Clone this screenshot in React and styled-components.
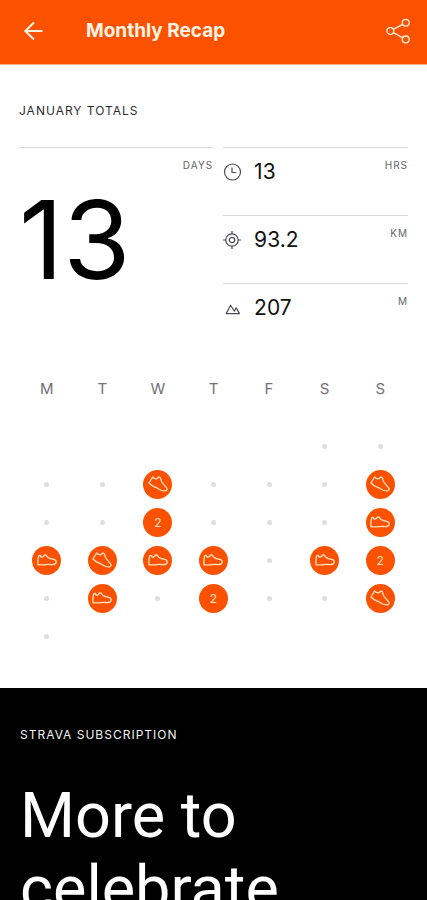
import styled, { createGlobalStyle } from "styled-components";

const GlobalStyle = createGlobalStyle`
  * {
    box-sizing: border-box;
  }

  body {
    margin: 0;
    background: #fff;
    color: #000;
    font-family: Inter, "Liberation Sans", sans-serif;
  }

  h1, h2, p, dl, dd {
    margin: 0;
  }
`;

const Header = styled.header`
  display: flex;
  align-items: center;
  height: 65px;
  padding: 0 14px 2px 20px;
  background: #fc5200;
  border-bottom: 1px solid #fdb594;
  color: #fff3e4;
`;

const IconButton = styled.button`
  display: flex;
  padding: 0;
  border: none;
  background: none;
  color: inherit;
  cursor: pointer;
`;

const Title = styled.h1`
  flex: 1;
  padding-left: 40px;
  font-size: 19px;
  font-weight: 700;
  line-height: 26px;
`;

const Section = styled.section`
  padding: 36px 19px 33px;
`;

const Eyebrow = styled.h2`
  font-size: 12px;
  font-weight: 400;
  line-height: 20px;
  letter-spacing: 1px;
  text-transform: uppercase;
  color: ${({ $light }) => ($light ? "#f2f2f2" : "#2b2b2f")};
`;

const Totals = styled.dl`
  display: grid;
  grid-template-columns: 21fr 20fr;
  column-gap: 10px;
  margin-top: 26px;
`;

const Days = styled.div`
  display: flex;
  flex-direction: column;
  border-top: 1px solid #d9d9d9;
  padding-top: 10px;
`;

const Unit = styled.dt`
  align-self: flex-start;
  margin-left: auto;
  font-size: 10px;
  line-height: 14px;
  letter-spacing: 1px;
  color: #66666b;
`;

const BigNumber = styled.dd`
  font-size: 109px;
  line-height: 134px;
`;

const Stats = styled.div`
  display: flex;
  flex-direction: column;
`;

const Stat = styled.div`
  display: flex;
  flex-direction: row-reverse;
  align-items: flex-start;
  height: 68px;
  padding-top: 10px;
  border-top: 1px solid #d9d9d9;
`;

const StatValue = styled.dd`
  display: flex;
  align-items: center;
  gap: 12px;
  font-size: 21px;
  line-height: 28px;
  color: #111;

  svg {
    color: #4c4c50;
  }
`;

const Calendar = styled.table`
  width: 100%;
  margin-top: 24px;
  border-collapse: collapse;
  table-layout: fixed;
`;

const Weekday = styled.th`
  height: 52px;
  padding: 0 0 24px;
  font-size: 15px;
  font-weight: 400;
  line-height: 20px;
  color: #717176;
`;

const Day = styled.td`
  height: 38px;
  padding: 0;
`;

const Dot = styled.div`
  width: 5px;
  height: 5px;
  margin: 0 auto;
  border-radius: 50%;
  background: #dedede;
`;

const Activity = styled.div`
  display: flex;
  align-items: center;
  justify-content: center;
  width: 29px;
  height: 29px;
  margin: 0 auto;
  border-radius: 50%;
  background: #fc5200;
  color: #ffe3c4;
  font-size: 12px;
`;

const Subscription = styled.section`
  padding: 37px 20px 40px;
  background: #000;
  color: #fff;
`;

const Headline = styled.p`
  max-width: 320px;
  margin-top: 34px;
  font-family: Roboto, "Liberation Sans", sans-serif;
  font-size: 63px;
  font-weight: 400;
  line-height: 73px;
`;

function BackIcon() {
  return (
    <svg
      width="26"
      height="26"
      viewBox="0 0 26 26"
      fill="none"
      stroke="currentColor"
      strokeWidth="2"
    >
      <path d="M22.5 13H5.5M14 4.5 5.3 13l8.7 8.5" />
    </svg>
  );
}

function ShareIcon() {
  return (
    <svg
      width="30"
      height="30"
      viewBox="0 0 30 30"
      fill="none"
      stroke="currentColor"
      strokeWidth="1.3"
    >
      <circle cx="7.3" cy="15" r="3.4" />
      <circle cx="22.7" cy="6.8" r="3.4" />
      <circle cx="22.7" cy="23.4" r="3.4" />
      <path d="m10.3 13.4 9.4-5M10.3 16.6l9.4 5.2" />
    </svg>
  );
}

function StatIcon({ children }) {
  return (
    <svg
      width="19"
      height="19"
      viewBox="0 0 19 19"
      fill="none"
      stroke="currentColor"
      strokeWidth="1.2"
    >
      {children}
    </svg>
  );
}

function ClockIcon() {
  return (
    <StatIcon>
      <circle cx="9.5" cy="9" r="8" />
      <path d="M9 4.5v5h4.3" />
    </StatIcon>
  );
}

function TargetIcon() {
  return (
    <StatIcon>
      <circle cx="9" cy="9" r="6.2" />
      <circle cx="9" cy="9" r="2.7" />
      <path d="M9 0v3M9 15v3M0 9h3M15 9h3" />
    </StatIcon>
  );
}

function MountainIcon() {
  return (
    <StatIcon>
      <path d="m3.2 14.6 4.4-8.4 3.7 6 1.9-3.4 3.3 5.8Z" strokeLinejoin="round" />
    </StatIcon>
  );
}

function ShoeIcon({ tilted }) {
  return (
    <svg
      width="24"
      height="24"
      viewBox="-12 -12 24 24"
      fill="none"
      stroke="currentColor"
      strokeWidth="1.3"
      strokeLinejoin="round"
    >
      {tilted ? (
        <path d="M-9-1-5.4-7l1.7 1.4C-2.4-5-.4-5.3.6-6.8l1.6.2c.6 2.2 1 3.9 2.2 5.5L8.8 4.2c.8 1.3 0 2.4-1.4 2.6C5.2 7 3 6.4 1.2 5.2-.4 4.2-1.6 3.4-3.4 2.8-5.6 2-7.4.8-9-1Z" />
      ) : (
        <path d="M-9-.8-8.2-4.4l1.6-.2.8 1.8c1.4.3 2.6-.8 3.4-2.3l1.4.1C-.1-3.1 1.4-2 3.3-1.5l3.5.8C8.5-.3 9.3.9 9.2 2.1 9 3.7 7.7 4.4 6.1 4.5c-2.4.2-4.6-.3-7 .1-2.5.4-5.3.2-8.1.2-.2-2-.2-3.7 0-5.6Z" />
      )}
    </svg>
  );
}

const weekdays = ["M", "T", "W", "T", "F", "S", "S"];

// "." rest day, "s" shoe, "t" tilted shoe, "2" two activities, " " outside the month
const weeks = ["     ..", "..t...t", "..2...s", "stss.s2", ".s.2..t", ".      "];

const stats = [
  { unit: "HRS", value: "13", Icon: ClockIcon },
  { unit: "KM", value: "93.2", Icon: TargetIcon },
  { unit: "M", value: "207", Icon: MountainIcon },
];

function DayMark({ type }) {
  if (type === " ") return null;
  if (type === ".") return <Dot />;
  return (
    <Activity>
      {type === "2" ? "2" : <ShoeIcon tilted={type === "t"} />}
    </Activity>
  );
}

function App() {
  return (
    <>
      <GlobalStyle />
      <Header>
        <IconButton aria-label="Back">
          <BackIcon />
        </IconButton>
        <Title>Monthly Recap</Title>
        <IconButton aria-label="Share">
          <ShareIcon />
        </IconButton>
      </Header>
      <main>
        <Section>
          <Eyebrow>January totals</Eyebrow>
          <Totals>
            <Days>
              <Unit>DAYS</Unit>
              <BigNumber>13</BigNumber>
            </Days>
            <Stats>
              {stats.map(({ unit, value, Icon }) => (
                <Stat key={unit}>
                  <Unit>{unit}</Unit>
                  <StatValue>
                    <Icon />
                    {value}
                  </StatValue>
                </Stat>
              ))}
            </Stats>
          </Totals>
          <Calendar>
            <thead>
              <tr>
                {weekdays.map((day, i) => (
                  <Weekday key={i} scope="col">
                    {day}
                  </Weekday>
                ))}
              </tr>
            </thead>
            <tbody>
              {weeks.map((week, i) => (
                <tr key={i}>
                  {week.split("").map((type, j) => (
                    <Day key={j}>
                      <DayMark type={type} />
                    </Day>
                  ))}
                </tr>
              ))}
            </tbody>
          </Calendar>
        </Section>
        <Subscription>
          <Eyebrow $light>Strava subscription</Eyebrow>
          <Headline>More to celebrate</Headline>
        </Subscription>
      </main>
    </>
  );
}

export default App;
